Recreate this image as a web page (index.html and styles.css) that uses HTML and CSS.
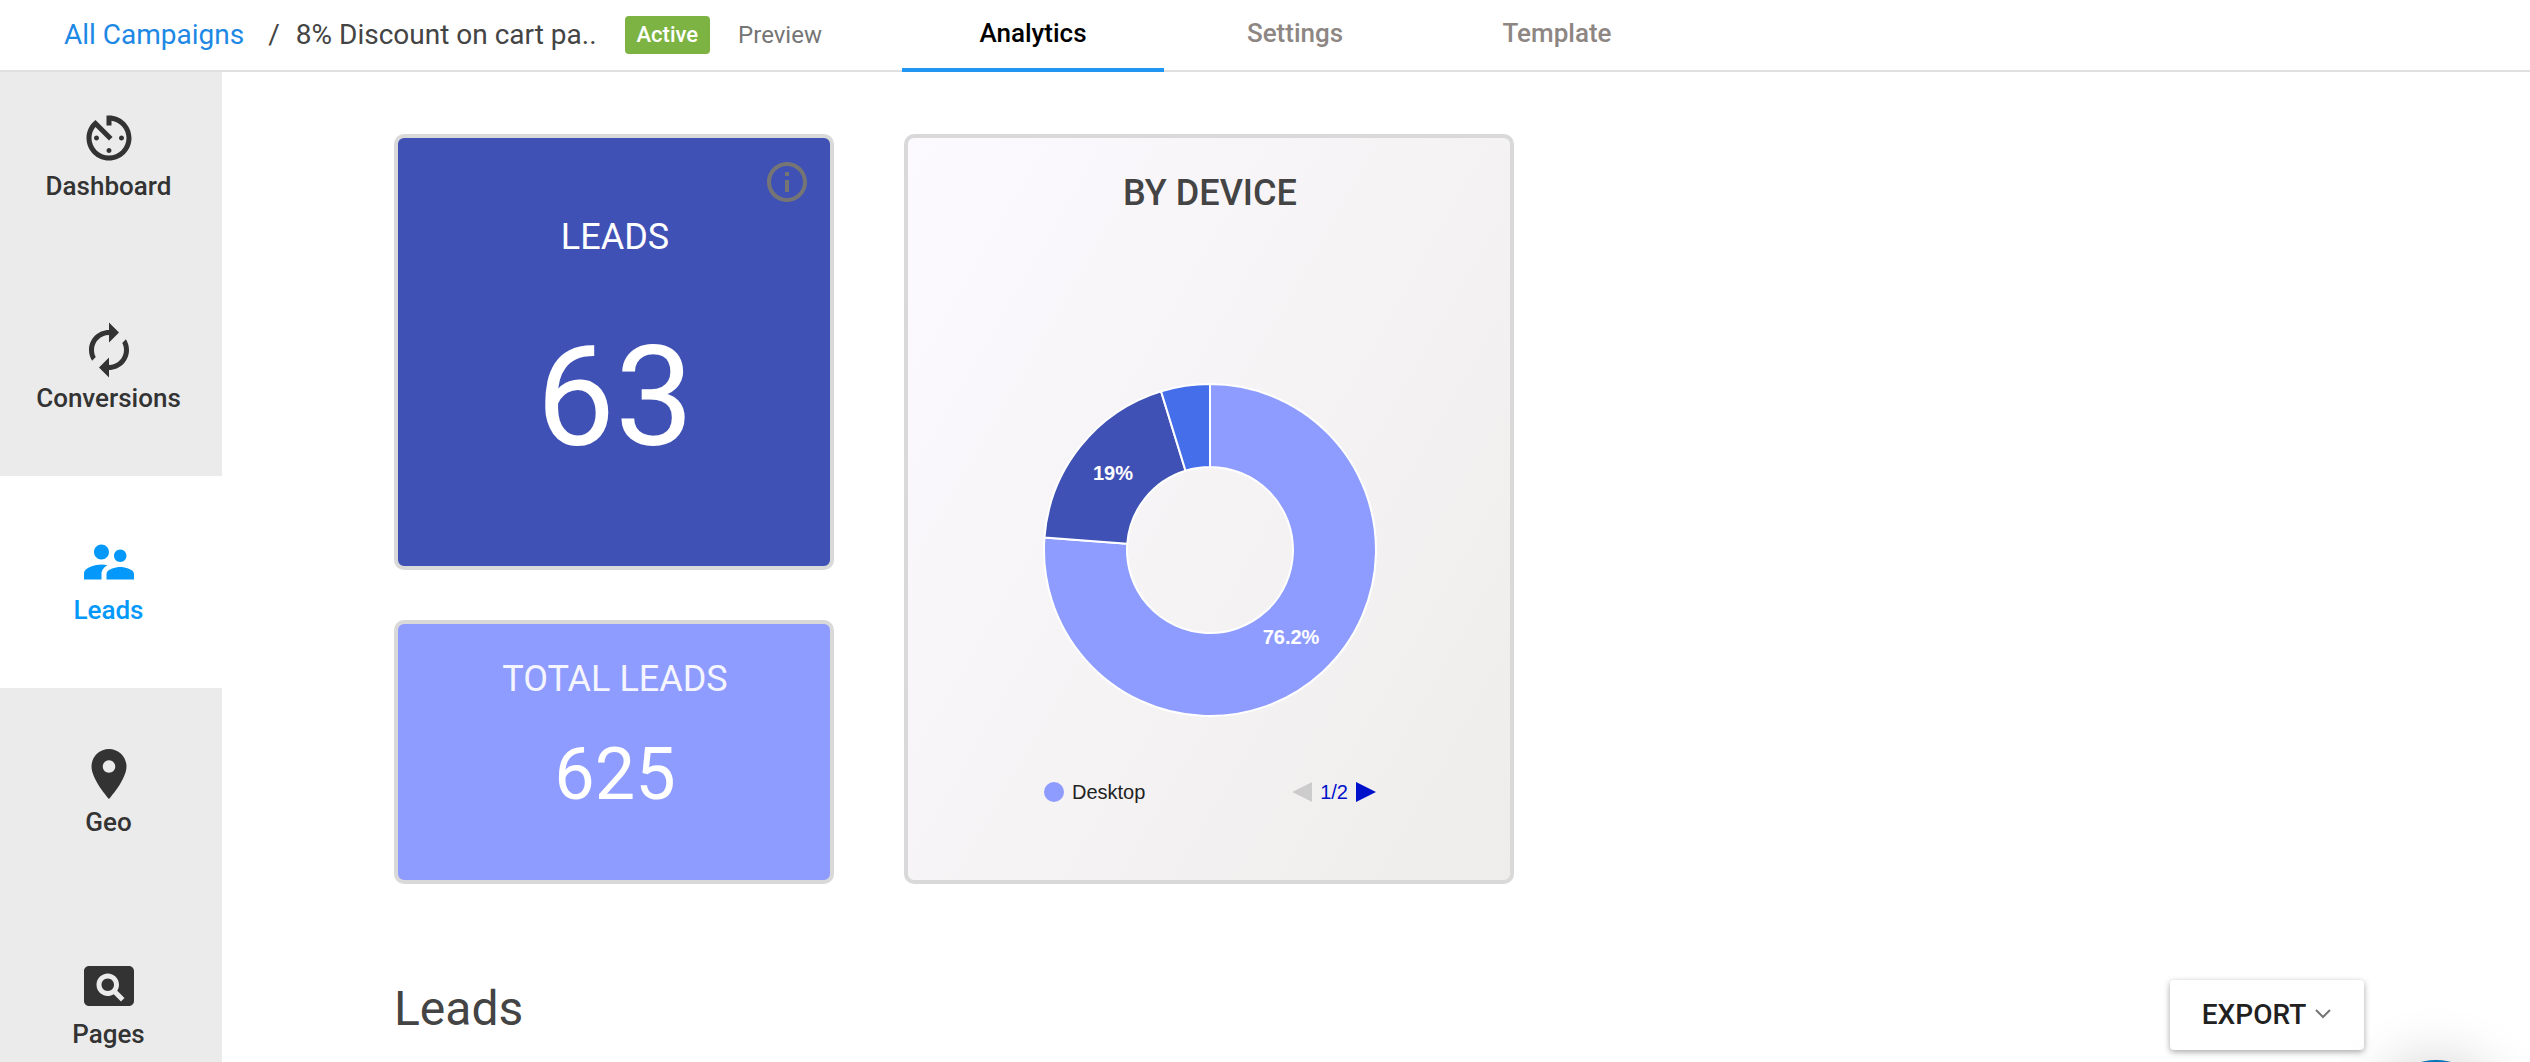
FILE: index.html
```html
<!DOCTYPE html>
<html lang="en">

<head>
  <meta charset="UTF-8">
  <meta name="viewport" content="width=device-width, initial-scale=1.0">
  <title>Campaign Analytics</title>
  <link rel="stylesheet" href="styles.css">
</head>

<body>
  <header class="topbar">
    <div class="crumbs">
      <a href="#" class="all">All Campaigns</a>
      <span class="slash">/</span>
      <span class="name">8% Discount on cart pa..</span>
      <span class="badge">Active</span>
      <a href="#" class="preview">Preview</a>
    </div>
    <nav class="tabs">
      <a href="#" class="tab active">Analytics</a>
      <a href="#" class="tab">Settings</a>
      <a href="#" class="tab">Template</a>
    </nav>
  </header>

  <div class="page">
    <nav class="sidebar">
      <a href="#" class="item">
        <svg viewBox="0 0 24 24"><path d="M11 17c0 .55.45 1 1 1s1-.45 1-1-.45-1-1-1-1 .45-1 1zm0-14v4h2V5.08c3.39.49 6 3.39 6 6.92 0 3.87-3.13 7-7 7s-7-3.13-7-7c0-1.68.59-3.22 1.58-4.42L12 13l1.41-1.41-6.8-6.8v.02C4.42 6.45 3 9.05 3 12c0 4.97 4.02 9 9 9 4.97 0 9-4.03 9-9s-4.03-9-9-9h-1zm7 9c0-.55-.45-1-1-1s-1 .45-1 1 .45 1 1 1 1-.45 1-1zM6 12c0 .55.45 1 1 1s1-.45 1-1-.45-1-1-1-1 .45-1 1z"/></svg>
        <span>Dashboard</span>
      </a>
      <a href="#" class="item">
        <svg viewBox="0 0 24 24"><path d="M12 6v3l4-4-4-4v3c-4.42 0-8 3.58-8 8 0 1.57.46 3.03 1.24 4.26L6.7 14.8c-.45-.83-.7-1.79-.7-2.8 0-3.31 2.69-6 6-6zm6.76 1.74L17.3 9.2c.44.84.7 1.79.7 2.8 0 3.31-2.69 6-6 6v-3l-4 4 4 4v-3c4.42 0 8-3.58 8-8 0-1.57-.46-3.03-1.24-4.26z"/></svg>
        <span>Conversions</span>
      </a>
      <a href="#" class="item current">
        <svg viewBox="0 0 24 24"><path d="M16.5 12c1.38 0 2.49-1.12 2.49-2.5S17.88 7 16.5 7C15.12 7 14 8.12 14 9.5s1.12 2.5 2.5 2.5zM9 11c1.66 0 2.99-1.34 2.99-3S10.66 5 9 5C7.34 5 6 6.34 6 8s1.34 3 3 3zm7.5 3c-1.83 0-5.5.92-5.5 2.75V19h11v-2.25c0-1.83-3.67-2.75-5.5-2.75zM9 13c-2.33 0-7 1.17-7 3.5V19h7v-2.25c0-.85.33-2.34 2.37-3.47C10.5 13.1 9.66 13 9 13z"/></svg>
        <span>Leads</span>
      </a>
      <a href="#" class="item">
        <svg viewBox="0 0 24 24"><path d="M12 2C8.13 2 5 5.13 5 9c0 5.25 7 13 7 13s7-7.75 7-13c0-3.87-3.13-7-7-7zm0 9.5c-1.38 0-2.5-1.12-2.5-2.5s1.12-2.5 2.5-2.5 2.5 1.12 2.5 2.5-1.12 2.5-2.5 2.5z"/></svg>
        <span>Geo</span>
      </a>
      <a href="#" class="item">
        <svg viewBox="0 0 24 24"><path d="M11.5 9C10.12 9 9 10.12 9 11.5s1.12 2.5 2.5 2.5 2.5-1.12 2.5-2.5S12.88 9 11.5 9zM20 4H4c-1.1 0-2 .9-2 2v12c0 1.1.9 2 2 2h16c1.1 0 2-.9 2-2V6c0-1.1-.9-2-2-2zm-3.21 14.21l-2.91-2.91c-.69.44-1.51.7-2.39.7C9.01 16 7 13.99 7 11.5S9.01 7 11.5 7 16 9.01 16 11.5c0 .88-.26 1.69-.7 2.39l2.91 2.9-1.42 1.42z"/></svg>
        <span>Pages</span>
      </a>
    </nav>

    <main class="content">
      <section class="cards">
        <div class="stats">
          <div class="card leads">
            <button class="info" aria-label="Info">
              <svg viewBox="0 0 24 24"><path d="M11 17h2v-6h-2v6zm1-15C6.48 2 2 6.48 2 12s4.48 10 10 10 10-4.48 10-10S17.52 2 12 2zm0 18c-4.41 0-8-3.59-8-8s3.59-8 8-8 8 3.59 8 8-3.59 8-8 8zM11 9h2V7h-2v2z"/></svg>
            </button>
            <h2>LEADS</h2>
            <p>63</p>
          </div>
          <div class="card total">
            <h2>TOTAL LEADS</h2>
            <p>625</p>
          </div>
        </div>
        <div class="card device">
          <h2>BY DEVICE</h2>
          <!-- 48 / 12 / 3 of 63 leads -->
          <svg class="donut" viewBox="-168 -168 336 336">
            <path fill="#8e9cff" d="M0-166A166 166 0 1 1-165.54-12.41L-82.77-6.2A83 83 0 1 0 0-83Z"/>
            <path fill="#3f51b5" d="M-165.54-12.41A166 166 0 0 1-48.93-158.63L-24.46-79.31A83 83 0 0 0-82.77-6.2Z"/>
            <path fill="#446eea" d="M-48.93-158.63A166 166 0 0 1 0-166L0-83A83 83 0 0 0-24.46-79.31Z"/>
            <text x="-97" y="-70">19%</text>
            <text x="81" y="94">76.2%</text>
          </svg>
          <div class="legend">
            <span class="dot"></span>
            <span class="label">Desktop</span>
            <button class="prev" aria-label="Previous" disabled></button>
            <span class="count">1/2</span>
            <button class="next" aria-label="Next"></button>
          </div>
        </div>
      </section>

      <section class="list-head">
        <h1>Leads</h1>
        <button class="export">EXPORT
          <svg viewBox="0 0 18 12"><path d="M2 2l7 7 7-7"/></svg>
        </button>
      </section>
    </main>
  </div>

  <button class="chat" aria-label="Chat"></button>
</body>

</html>
```
FILE: styles.css
```css
* {
  box-sizing: border-box;
}

body {
  margin: 0;
  height: 100vh;
  overflow: hidden;
  display: flex;
  flex-direction: column;
  background-color: #fff;
  font-family: Roboto, "Liberation Sans", sans-serif;
  color: #444;
}

a {
  text-decoration: none;
}

button {
  padding: 0;
  border: 0;
  background: none;
  font-family: inherit;
  cursor: pointer;
}

h1,
h2,
p {
  margin: 0;
}

/* top bar */
.topbar {
  display: flex;
  flex-shrink: 0;
  height: 72px;
  border-bottom: 2px solid #e0e0e0;
}

.crumbs {
  display: flex;
  align-items: flex-start;
  width: 902px;
  padding: 16px 0 0 64px;
  font-size: 28px;
  line-height: 38px;
  white-space: nowrap;
}

.crumbs .all {
  color: #1e88e5;
}

.crumbs .slash {
  margin: 0 16px 0 24px;
}

.crumbs .badge {
  margin-left: 28px;
  padding: 0 12px;
  border-radius: 4px;
  background-color: #7cb342;
  color: #fff;
  font-size: 22px;
  font-weight: 500;
}

.crumbs .preview {
  margin-left: 28px;
  color: #757575;
  font-size: 24px;
}

.tabs {
  display: flex;
}

.tab {
  width: 262px;
  height: 72px;
  color: #8d8683;
  font-size: 26px;
  font-weight: 500;
  line-height: 66px;
  text-align: center;
}

.tab.active {
  border-bottom: 4px solid #2196f3;
  color: #000;
}

.page {
  display: flex;
  flex: 1;
  min-height: 0;
}

/* left menu */
.sidebar {
  flex-shrink: 0;
  width: 222px;
  overflow: hidden;
  background-color: #ebebeb;
}

.item {
  display: flex;
  flex-direction: column;
  align-items: center;
  height: 212px;
  padding: 56px 5px 0 0;
  color: #333;
  font-size: 26px;
  font-weight: 500;
  line-height: 36px;
}

.item:first-child {
  height: 192px;
  padding-top: 36px;
}

.item svg {
  width: 60px;
  height: 60px;
  fill: currentColor;
}

.item.current {
  background-color: #fff;
  color: #0398fa;
}

/* cards */
.content {
  flex: 1;
  padding: 62px 166px 0 172px;
}

.cards {
  display: flex;
  gap: 70px;
}

.stats {
  display: flex;
  flex-direction: column;
  gap: 50px;
  width: 440px;
}

.card {
  padding-left: 2px;
  border: 4px solid #d9d9d9;
  border-radius: 10px;
  text-align: center;
}

.card h2 {
  font-size: 36px;
  font-weight: 500;
  line-height: 40px;
}

.card p {
  color: #fff;
}

.leads {
  position: relative;
  height: 436px;
  padding-top: 79px;
  background-color: #3f51b5;
}

.leads h2,
.total h2 {
  font-weight: 400;
}

.leads h2 {
  color: #fff;
}

.leads p {
  margin-top: 60px;
  font-size: 140px;
  line-height: 160px;
}

.info {
  position: absolute;
  top: 20px;
  right: 19px;
  width: 48px;
  height: 48px;
}

.info svg {
  display: block;
  fill: #757575;
}

.total {
  height: 264px;
  padding-top: 35px;
  background-color: #8e9cff;
}

.total h2 {
  color: #f5f5ff;
}

.total p {
  margin-top: 36px;
  font-size: 72px;
  line-height: 80px;
}

.device {
  width: 610px;
  padding-top: 35px;
  background: linear-gradient(120deg, #fcfaff, #f5f3f4 50%, #eeedeb);
}

.donut {
  display: block;
  width: 336px;
  height: 336px;
  margin: 169px auto 0;
}

.donut path {
  stroke: #fff;
  stroke-width: 2;
}

.donut text {
  fill: #fff;
  font-family: "Liberation Sans", sans-serif;
  font-size: 20px;
  font-weight: bold;
  text-anchor: middle;
}

.legend {
  display: flex;
  align-items: center;
  width: 332px;
  margin: 62px auto 0;
  color: #222;
  font-family: "Liberation Sans", sans-serif;
  font-size: 20px;
  line-height: 24px;
}

.dot {
  width: 20px;
  height: 20px;
  margin-right: 8px;
  border-radius: 50%;
  background-color: #8e9cff;
}

.prev,
.next {
  width: 20px;
  height: 20px;
}

.prev {
  margin-left: auto;
  background-color: #ccc;
  clip-path: polygon(100% 0, 100% 100%, 0 50%);
}

.next {
  background-color: #01c;
  clip-path: polygon(0 0, 100% 50%, 0 100%);
}

.count {
  margin: 0 8px;
  color: #01c;
}

/* leads list */
.list-head {
  display: flex;
  justify-content: space-between;
  margin-top: 96px;
}

.list-head h1 {
  font-size: 48px;
  font-weight: 400;
  line-height: 58px;
}

.export {
  display: flex;
  align-items: center;
  justify-content: center;
  gap: 8px;
  width: 194px;
  height: 70px;
  padding-bottom: 2px;
  border-radius: 4px;
  box-shadow: 0 2px 6px rgba(0, 0, 0, .35);
  color: #212121;
  font-size: 28px;
  font-weight: 500;
}

.export svg {
  width: 18px;
  height: 12px;
  fill: none;
  stroke: #757575;
  stroke-width: 2;
}

/* chat launcher, peeks in from the bottom edge */
.chat {
  position: fixed;
  right: 34px;
  bottom: -118px;
  width: 120px;
  height: 120px;
  border-radius: 50%;
  background-color: #0573b5;
  box-shadow: 0 2px 60px rgba(0, 0, 0, .2);
}
```
